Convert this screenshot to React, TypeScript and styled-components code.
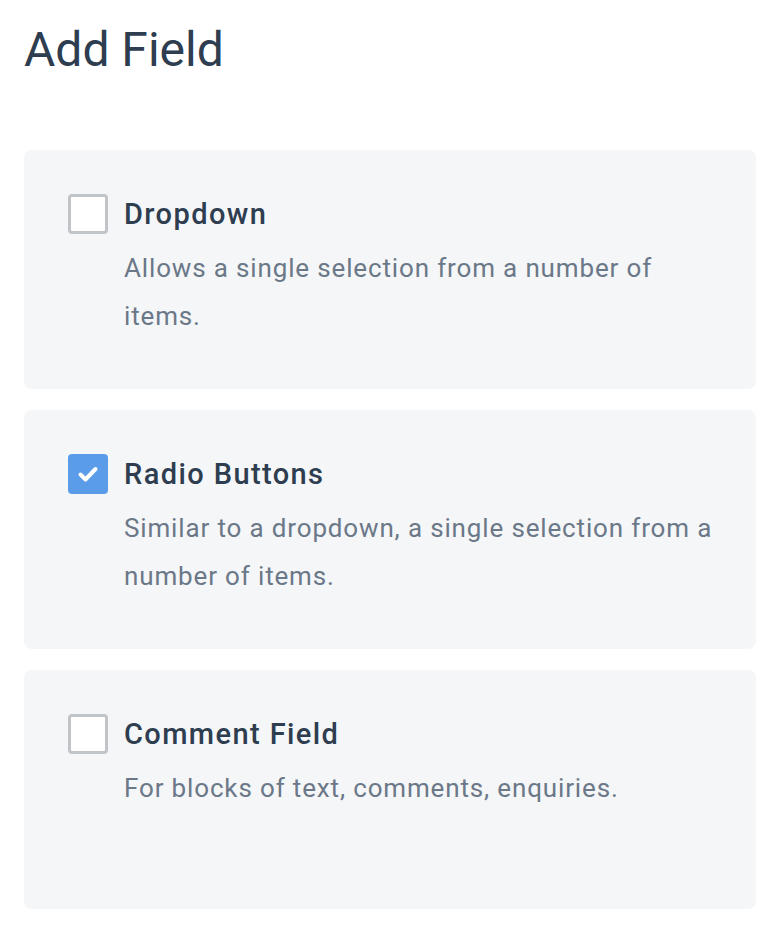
import React, { useState } from 'react';
import styled, { createGlobalStyle } from 'styled-components';

const GlobalStyle = createGlobalStyle`
  body {
    margin: 0;
    background: #ffffff;
    font-family: Roboto, "Liberation Sans", sans-serif;
  }
`;

const Page = styled.div`
  padding: 20px 22px 0 24px;
`;

const Title = styled.h1`
  margin: 0 0 70px 0;
  font-size: 48px;
  font-weight: 400;
  line-height: 60px;
  color: #2e3d4f;
`;

const List = styled.div`
  display: flex;
  flex-direction: column;
  gap: 21px;
`;

const Card = styled.label`
  display: flex;
  gap: 16px;
  height: 239px;
  box-sizing: border-box;
  padding: 44px 30px 0 44px;
  background: #f5f6f8;
  border-radius: 8px;
  cursor: pointer;
`;

const Box = styled.span<{ $checked: boolean }>`
  flex: 0 0 auto;
  width: 40px;
  height: 40px;
  box-sizing: border-box;
  border-radius: 4px;
  border: ${p => (p.$checked ? 'none' : '3px solid #c0c5ca')};
  background: ${p => (p.$checked ? '#5b9ce9' : '#ffffff')};
  display: flex;
  align-items: center;
  justify-content: center;
`;

const Text = styled.div`
  display: flex;
  flex-direction: column;
`;

const Name = styled.div`
  font-size: 29px;
  font-weight: 500;
  line-height: 40px;
  letter-spacing: 1.4px;
  color: #2e3d4f;
`;

const Desc = styled.div`
  margin-top: 10px;
  font-size: 26px;
  line-height: 48px;
  letter-spacing: 0.85px;
  color: #6b7888;
`;

const fields = [
  { name: 'Dropdown', desc: 'Allows a single selection from a number of items.' },
  { name: 'Radio Buttons', desc: 'Similar to a dropdown, a single selection from a number of items.' },
  { name: 'Comment Field', desc: 'For blocks of text, comments, enquiries.' },
];

export default function App() {
  const [selected, setSelected] = useState<string[]>(['Radio Buttons']);
  const toggle = (n: string) =>
    setSelected(s => (s.includes(n) ? s.filter(x => x !== n) : [...s, n]));

  return (
    <Page>
      <GlobalStyle />
      <Title>Add Field</Title>
      <List>
        {fields.map(f => {
          const checked = selected.includes(f.name);
          return (
            <Card key={f.name} onClick={() => toggle(f.name)}>
              <Box $checked={checked}>
                {checked && (
                  <svg width="22" height="18" viewBox="0 0 22 18">
                    <path d="M3.5 9.5l5 5L18.5 4" fill="none" stroke="#fff" strokeWidth="4" strokeLinecap="round" strokeLinejoin="round" />
                  </svg>
                )}
              </Box>
              <Text>
                <Name>{f.name}</Name>
                <Desc>{f.desc}</Desc>
              </Text>
            </Card>
          );
        })}
      </List>
    </Page>
  );
}
